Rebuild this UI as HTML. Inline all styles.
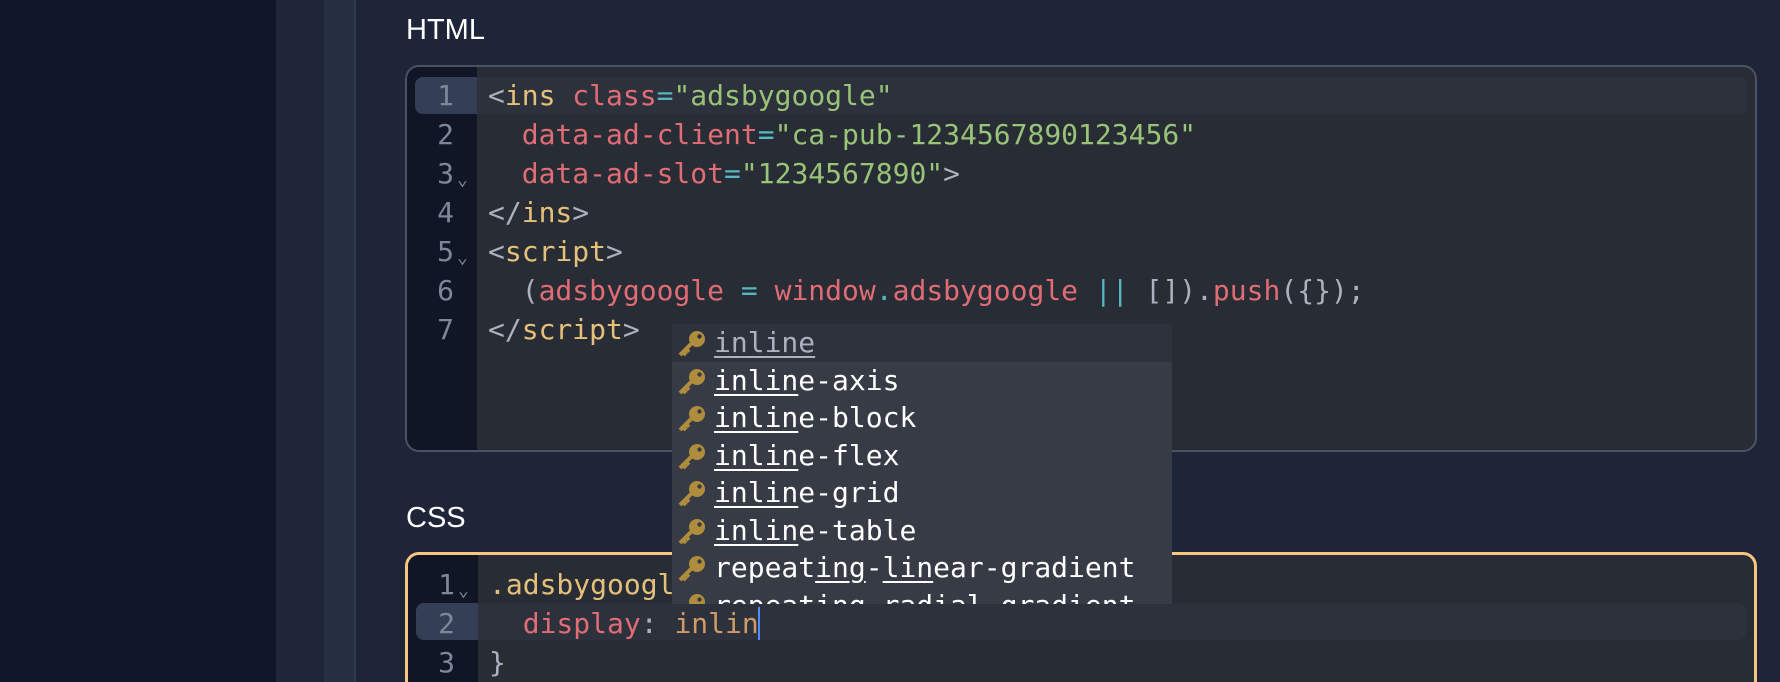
<!DOCTYPE html>
<html><head><meta charset="utf-8"><style>
*{margin:0;padding:0;box-sizing:border-box}
html{overflow:hidden;width:1780px;height:682px}
body{width:1780px;height:682px;overflow:hidden;background:#1e2538;position:relative;font-family:"DejaVu Sans Mono","Liberation Mono",monospace}
.sb{position:absolute;left:0;top:0;width:276px;height:682px;background:#111628}
.col{position:absolute;left:276px;top:0;width:48px;height:682px;background:#1f2639}
.col2{position:absolute;left:324px;top:0;width:32px;height:682px;background:#262e41;border-right:2px solid #323a4c}
.lbl{position:absolute;left:406px;font-family:"Liberation Sans",sans-serif;font-size:29px;color:#fff}
.ed{position:absolute;left:405px;width:1352px;background:#282c34;border:2px solid #4b5263;border-radius:14px;overflow:hidden}
.gut{position:absolute;left:0;top:0;bottom:0;width:70px;background:#111627}
.ln{position:absolute;left:0;height:39px;width:100%;font-size:28px;line-height:39px;white-space:pre;color:#abb2bf}
.ln .n{position:absolute;left:0;width:47px;text-align:right;color:#7d8799}
.ln .f{position:absolute;left:50px;top:6px;font-size:18px;color:#7d8799}
.ln .c{position:absolute;left:81px}
.hl{position:absolute;left:8px;right:8px;height:37px;background:#2c313c;border-radius:8px}
.hlg{position:absolute;left:8px;width:62px;height:37px;background:#343f55;border-radius:8px 0 0 8px}
.t{color:#e5c07b}.a{color:#e06c75}.s{color:#98c379}.e{color:#56b6c2}.v{color:#d19a66}
.pop{position:absolute;left:672px;top:324px;width:500px;height:280px;background:#363b46;overflow:hidden}
.it{height:37.5px;font-size:28px;line-height:37.5px;color:#fff;padding-left:42px;position:relative;white-space:pre}
.it:first-child{background:#2e323c;color:#abb2bf}
.it u{text-decoration:underline;text-underline-offset:4px}
.key{position:absolute;left:5px;top:6px}
</style></head><body>
<div class="sb"></div><div class="col"></div><div class="col2"></div>
<div class="lbl" style="top:14px">HTML</div>
<div class="ed" style="top:65px;height:387px">
 <div class="gut"></div>
 <div class="hl" style="top:10px"></div><div class="hlg" style="top:10px"></div>
 <div class="ln" style="top:9px"><span class="n">1</span><span class="c">&lt;<span class="t">ins</span> <span class="a">class</span><span class="e">=</span><span class="s">"adsbygoogle"</span></span></div>
 <div class="ln" style="top:48px"><span class="n">2</span><span class="c">  <span class="a">data-ad-client</span><span class="e">=</span><span class="s">"ca-pub-1234567890123456"</span></span></div>
 <div class="ln" style="top:87px"><span class="n">3</span><span class="f">⌄</span><span class="c">  <span class="a">data-ad-slot</span><span class="e">=</span><span class="s">"1234567890"</span>&gt;</span></div>
 <div class="ln" style="top:126px"><span class="n">4</span><span class="c">&lt;/<span class="t">ins</span>&gt;</span></div>
 <div class="ln" style="top:165px"><span class="n">5</span><span class="f">⌄</span><span class="c">&lt;<span class="t">script</span>&gt;</span></div>
 <div class="ln" style="top:204px"><span class="n">6</span><span class="c">  (<span class="a">adsbygoogle</span> <span class="e">=</span> <span class="a">window</span><span class="e">.</span><span class="a">adsbygoogle</span> <span class="e">||</span> []).<span class="a">push</span>({});</span></div>
 <div class="ln" style="top:243px"><span class="n">7</span><span class="c">&lt;/<span class="t">script</span>&gt;</span></div>
</div>
<div class="lbl" style="top:502px">CSS</div>
<div class="ed" style="top:552px;height:160px;border:3px solid #f5c77e">
 <div class="gut"></div>
 <div class="hl" style="top:48px"></div><div class="hlg" style="top:48px"></div>
 <div class="ln" style="top:10px"><span class="n">1</span><span class="f">⌄</span><span class="c"><span class="t">.adsbygoogle</span> {</span></div>
 <div class="ln" style="top:49px"><span class="n">2</span><span class="c">  <span class="a">display</span>: <span class="v">inlin</span><span style="border-left:2px solid #528bff;margin-left:-1px"></span></span></div>
 <div class="ln" style="top:88px"><span class="n">3</span><span class="c">}</span></div>
</div>
<div class="pop">
<div class="it"><svg class="key" width="30" height="28" viewBox="0 0 30 28"><circle cx="20" cy="9" r="8" fill="#b08d3c"/><circle cx="22.5" cy="6.5" r="2.2" fill="#2e323c"/><path d="M14 14 L3 25 M6 22 L9 25 M9 19 L12 22" stroke="#b08d3c" stroke-width="4" fill="none"/></svg><u>inline</u></div>
<div class="it"><svg class="key" width="30" height="28" viewBox="0 0 30 28"><circle cx="20" cy="9" r="8" fill="#b08d3c"/><circle cx="22.5" cy="6.5" r="2.2" fill="#363b46"/><path d="M14 14 L3 25 M6 22 L9 25 M9 19 L12 22" stroke="#b08d3c" stroke-width="4" fill="none"/></svg><u>inlin</u>e-axis</div>
<div class="it"><svg class="key" width="30" height="28" viewBox="0 0 30 28"><circle cx="20" cy="9" r="8" fill="#b08d3c"/><circle cx="22.5" cy="6.5" r="2.2" fill="#363b46"/><path d="M14 14 L3 25 M6 22 L9 25 M9 19 L12 22" stroke="#b08d3c" stroke-width="4" fill="none"/></svg><u>inlin</u>e-block</div>
<div class="it"><svg class="key" width="30" height="28" viewBox="0 0 30 28"><circle cx="20" cy="9" r="8" fill="#b08d3c"/><circle cx="22.5" cy="6.5" r="2.2" fill="#363b46"/><path d="M14 14 L3 25 M6 22 L9 25 M9 19 L12 22" stroke="#b08d3c" stroke-width="4" fill="none"/></svg><u>inlin</u>e-flex</div>
<div class="it"><svg class="key" width="30" height="28" viewBox="0 0 30 28"><circle cx="20" cy="9" r="8" fill="#b08d3c"/><circle cx="22.5" cy="6.5" r="2.2" fill="#363b46"/><path d="M14 14 L3 25 M6 22 L9 25 M9 19 L12 22" stroke="#b08d3c" stroke-width="4" fill="none"/></svg><u>inlin</u>e-grid</div>
<div class="it"><svg class="key" width="30" height="28" viewBox="0 0 30 28"><circle cx="20" cy="9" r="8" fill="#b08d3c"/><circle cx="22.5" cy="6.5" r="2.2" fill="#363b46"/><path d="M14 14 L3 25 M6 22 L9 25 M9 19 L12 22" stroke="#b08d3c" stroke-width="4" fill="none"/></svg><u>inlin</u>e-table</div>
<div class="it"><svg class="key" width="30" height="28" viewBox="0 0 30 28"><circle cx="20" cy="9" r="8" fill="#b08d3c"/><circle cx="22.5" cy="6.5" r="2.2" fill="#363b46"/><path d="M14 14 L3 25 M6 22 L9 25 M9 19 L12 22" stroke="#b08d3c" stroke-width="4" fill="none"/></svg>repeat<u>ing</u>-<u>lin</u>ear-gradient</div>
<div class="it"><svg class="key" width="30" height="28" viewBox="0 0 30 28"><circle cx="20" cy="9" r="8" fill="#b08d3c"/><circle cx="22.5" cy="6.5" r="2.2" fill="#363b46"/><path d="M14 14 L3 25 M6 22 L9 25 M9 19 L12 22" stroke="#b08d3c" stroke-width="4" fill="none"/></svg>repeat<u>ing</u>-radial-gradient</div>
</div>
</body></html>
